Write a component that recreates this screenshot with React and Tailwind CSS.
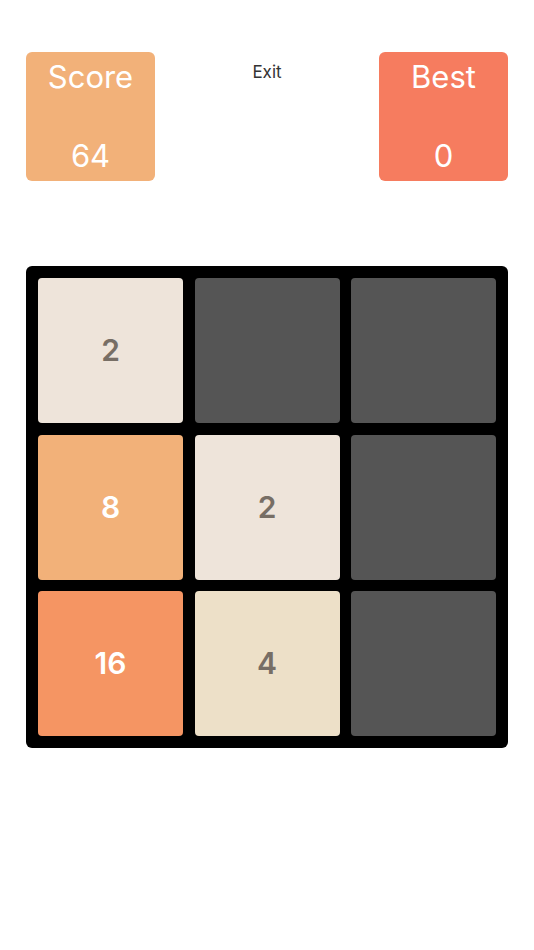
import React from 'react';

const tiles = [
  2, 0, 0,
  8, 2, 0,
  16, 4, 0,
];

const tileStyles = {
  0: 'bg-[#555555]',
  2: 'bg-[#eee4da] text-[#776e65]',
  4: 'bg-[#ede0c8] text-[#776e65]',
  8: 'bg-[#f2b179] text-white',
  16: 'bg-[#f59563] text-white',
};

function ScoreBox({ label, value, color }) {
  return (
    <div className={`w-[129px] h-[129px] rounded-md ${color} flex flex-col items-center justify-between pt-[1px] pb-[1px] text-white text-[31px] leading-[48px]`}>
      <span>{label}</span>
      <span>{value}</span>
    </div>
  );
}

export default function App() {
  return (
    <div className="w-[534px] h-[950px] bg-white font-['Inter',_'Liberation_Sans',_sans-serif]">
      <div className="flex justify-between items-start px-[26px] pt-[52px]">
        <ScoreBox label="Score" value="64" color="bg-[#f2b179]" />
        <button className="mt-[8px] text-[17px] text-[#333333]">Exit</button>
        <ScoreBox label="Best" value="0" color="bg-[#f67c5f]" />
      </div>

      <div className="mx-[26px] mt-[85px] w-[482px] h-[482px] bg-black rounded-md p-[12px] grid grid-cols-3 grid-rows-3 gap-[11.5px]">
        {tiles.map((v, i) => (
          <div
            key={i}
            className={`rounded flex items-center justify-center text-[30px] font-semibold ${tileStyles[v]}`}
          >
            {v !== 0 && v}
          </div>
        ))}
      </div>
    </div>
  );
}
